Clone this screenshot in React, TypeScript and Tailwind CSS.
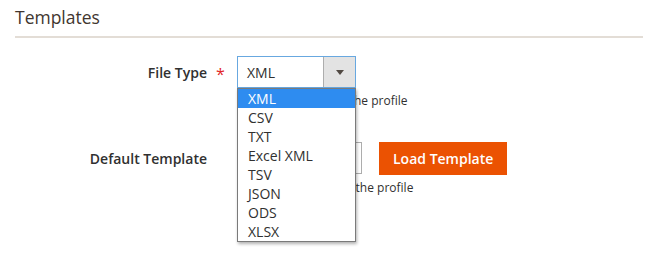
const fileTypes = ["XML", "CSV", "TXT", "Excel XML", "TSV", "JSON", "ODS", "XLSX"];

const Caret = () => (
  <svg width="8" height="5" viewBox="0 0 8 5">
    <path d="M0 0h8L4 5z" fill="#514943" />
  </svg>
);

const App = () => {
  return (
    <div className="w-[658px] h-[269px] bg-white text-[#303030] font-['Open_Sans',sans-serif] px-[15px] overflow-hidden">
      {/* Section title */}
      <div className="pt-[5px] pb-[7px] border-b-2 border-[#e3ddd6]">
        <h2 className="text-[17.5px] leading-[24px] text-[#41362f]">Templates</h2>
      </div>

      {/* File Type row */}
      <div className="flex mt-[18px]">
        <div className="w-[192px] h-[32px] flex items-center justify-end">
          <span className="text-[14px] font-semibold">File Type</span>
        </div>
        <div className="w-[30px] h-[32px] flex items-center pl-[9px]">
          <span className="text-[#e22626] text-[16px] leading-none mt-[4px]">*</span>
        </div>
        <div className="relative">
          <div className="w-[119px] h-[32px] border border-[#68a8e0] flex bg-white">
            <div className="flex-1 flex items-center pl-[9px] text-[14px] text-[#303030]">XML</div>
            <div className="w-[32px] bg-[#e3e3e3] border-l border-[#adadad] flex items-center justify-center">
              <Caret />
            </div>
          </div>
          <div className="text-[12px] leading-[16px] mt-[5px] whitespace-nowrap">
            Select a file type for the profile
          </div>
          {/* Open dropdown list */}
          <ul className="absolute left-0 top-[32px] w-[119px] bg-white border border-[#7a7a7a] shadow-[1px_2px_3px_rgba(0,0,0,0.3)] z-10">
            {fileTypes.map((t, i) => (
              <li
                key={t}
                className={
                  i === 0
                    ? "h-[19px] leading-[19px] pl-[10px] text-[14px] bg-[#2e8cf0] text-white"
                    : "h-[19px] leading-[19px] pl-[10px] text-[14px] text-[#303030]"
                }
              >
                {t}
              </li>
            ))}
          </ul>
        </div>
      </div>

      {/* Default Template row */}
      <div className="flex mt-[33px]">
        <div className="w-[192px] h-[32px] flex items-center justify-end">
          <span className="text-[14px] font-semibold">Default Template</span>
        </div>
        <div className="w-[30px]" />
        <div>
          <div className="flex gap-[17px]">
            <div className="w-[125px] h-[32px] border border-[#adadad] bg-white" />
            <button className="h-[33px] px-[14px] bg-[#eb5202] text-white text-[14px] font-semibold">
              Load Template
            </button>
          </div>
          <div className="text-[12px] leading-[16px] mt-[5px] whitespace-nowrap">
            Select a template for the profile
          </div>
        </div>
      </div>
    </div>
  );
};

export default App;
